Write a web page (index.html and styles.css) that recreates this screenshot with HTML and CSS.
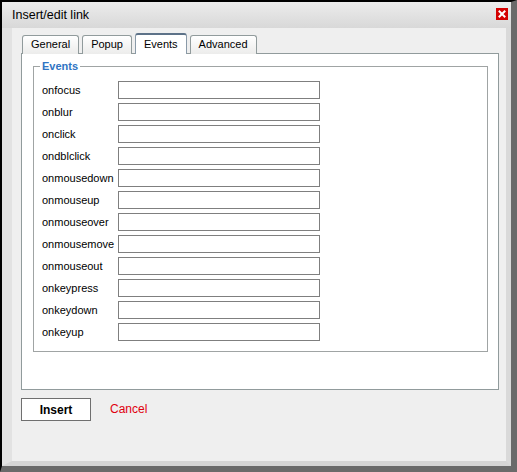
FILE: index.html
```html
<!DOCTYPE html>
<html>
<head>
<meta charset="utf-8">
<link rel="stylesheet" href="styles.css">
</head>
<body>
<div class="window">
  <div class="titlebar">
    <span class="title">Insert/edit link</span>
    <span class="close">
      <svg width="12" height="12" viewBox="0 0 12 12">
        <rect x="0" y="0" width="12" height="12" fill="#d40000"/>
        <path d="M3.5 3.5 L8.5 8.5 M8.5 3.5 L3.5 8.5" stroke="#fff" stroke-width="2" stroke-linecap="square"/>
      </svg>
    </span>
  </div>
  <div class="frame">
    <div class="content">
      <div class="tabs">
        <span class="tab">General</span>
        <span class="tab">Popup</span>
        <span class="tab active">Events</span>
        <span class="tab">Advanced</span>
      </div>
      <div class="panel">
        <fieldset class="events">
          <legend>Events</legend>
          <div class="row"><label>onfocus</label><input type="text"></div>
          <div class="row"><label>onblur</label><input type="text"></div>
          <div class="row"><label>onclick</label><input type="text"></div>
          <div class="row"><label>ondblclick</label><input type="text"></div>
          <div class="row"><label>onmousedown</label><input type="text"></div>
          <div class="row"><label>onmouseup</label><input type="text"></div>
          <div class="row"><label>onmouseover</label><input type="text"></div>
          <div class="row"><label>onmousemove</label><input type="text"></div>
          <div class="row"><label>onmouseout</label><input type="text"></div>
          <div class="row"><label>onkeypress</label><input type="text"></div>
          <div class="row"><label>onkeydown</label><input type="text"></div>
          <div class="row"><label>onkeyup</label><input type="text"></div>
        </fieldset>
      </div>
      <div class="actions">
        <button class="insert">Insert</button>
        <span class="cancel">Cancel</span>
      </div>
    </div>
  </div>
</div>
</body>
</html>
```
FILE: styles.css
```css
* { box-sizing: border-box; }
html, body { margin: 0; padding: 0; background: #fff; }
body { font-family: "Liberation Sans", Arial, sans-serif; }

.window {
  width: 517px;
  height: 472px;
  border-left: 2px solid #000;
  border-top: 2px solid #000;
  border-right: 6px solid #6a6a6a;
  border-bottom: 6px solid #6a6a6a;
  background: #ececec;
  display: flex;
  flex-direction: column;
}

.titlebar {
  height: 26px;
  flex: none;
  display: flex;
  align-items: center;
  justify-content: space-between;
  padding: 0 2px 1px 10px;
  background: linear-gradient(#ececec, #d8d8d8);
}
.title { font-size: 12.5px; color: #000; }
.close { display: flex; width: 12px; height: 12px; margin-top: -2px; margin-right: 1px; }

.frame {
  flex: 1;
  display: flex;
  border-left: 10px solid #e2e2e2;
  border-right: 5px solid #d9d9d9;
  border-bottom: 5px solid #d5d5d5;
  background: #efefef;
}
.content { flex: 1; padding: 6px 0 0 9px; }

.tabs {
  display: flex;
  align-items: flex-end;
  gap: 3px;
  height: 20px;
  margin-left: 1px;
  position: relative;
  z-index: 1;
  margin-bottom: -1px;
}
.tab {
  height: 19px;
  padding: 2px 8px 0;
  font-size: 11px;
  color: #000;
  border: 1px solid #919b9c;
  border-bottom: none;
  border-radius: 3px 3px 0 0;
  background: linear-gradient(#ffffff, #ececeb);
}
.tab.active {
  height: 21px;
  padding-top: 3px;
  border-color: #8a9aa8;
  border-top: 2px solid #5d7288;
  background: #fff;
}

.panel {
  width: 478px;
  height: 337px;
  border: 1px solid #919b9c;
  background: #fff;
  padding: 6px 11px 0 11px;
}

.events {
  margin: 0;
  width: 455px;
  border: 1px solid #a0a4a4;
  padding: 7px 0 8px 8px;
}
.events legend {
  font-size: 11px;
  font-weight: bold;
  color: #2f74c3;
  padding: 0 2px;
  margin-left: -2px;
}
.row {
  display: flex;
  align-items: center;
  height: 22px;
}
.row label {
  width: 76px;
  font-size: 11px;
  color: #000;
}
.row input {
  width: 202px;
  height: 18px;
  margin: 0;
  border: 1px solid #7f7f7f;
  background: #fff;
  outline: none;
}

.actions {
  display: flex;
  align-items: center;
  margin-top: 8px;
}
.insert {
  width: 70px;
  height: 23px;
  font-family: "Liberation Sans", Arial, sans-serif;
  font-size: 12px;
  font-weight: bold;
  color: #000;
  background: #fff;
  border: 1px solid #6f6f6f;
  margin: 0;
  padding: 0;
}
.cancel {
  margin-left: 19px;
  font-size: 12px;
  color: #e0000e;
  margin-top: -2px;
}
```
